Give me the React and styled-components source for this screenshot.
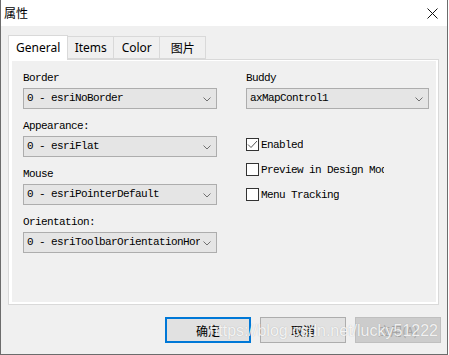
import React from "react";
import styled, { createGlobalStyle } from "styled-components";

const GlobalStyle = createGlobalStyle`
  html, body {
    margin: 0;
    padding: 0;
    background: #fff;
  }
  * {
    box-sizing: border-box;
  }
`;

const leftFields = [
  { label: "Border", value: "0 - esriNoBorder" },
  { label: "Appearance:", value: "0 - esriFlat" },
  { label: "Mouse", value: "0 - esriPointerDefault" },
  { label: "Orientation:", value: "0 - esriToolbarOrientationHorizontal" },
];

const checks = [
  { label: "Enabled", checked: true },
  { label: "Preview in Design Mode", checked: false },
  { label: "Menu Tracking", checked: false },
];

const tabs = ["General", "Items", "Color", "图片"];

function Chevron() {
  return (
    <svg width="8" height="5" viewBox="0 0 8 5">
      <polyline points="0.5,0.5 4,4 7.5,0.5" fill="none" stroke="#707070" strokeWidth="1" />
    </svg>
  );
}

function Combo({ value, width }) {
  return (
    <ComboBox $width={width}>
      <ComboText>{value}</ComboText>
      <ComboArrow>
        <Chevron />
      </ComboArrow>
    </ComboBox>
  );
}

export default function App() {
  return (
    <>
      <GlobalStyle />
      <Window>
        <TitleBar>
          <Title>属性</Title>
          <CloseButton>
            <svg width="11" height="11" viewBox="0 0 11 11">
              <line x1="0.5" y1="0.5" x2="10.5" y2="10.5" stroke="#111" strokeWidth="1" />
              <line x1="10.5" y1="0.5" x2="0.5" y2="10.5" stroke="#111" strokeWidth="1" />
            </svg>
          </CloseButton>
        </TitleBar>
        <Body>
          <TabRow>
            {tabs.map((t, i) => (
              <Tab key={t} $active={i === 0} $first={i === 0}>
                {t}
              </Tab>
            ))}
          </TabRow>
          <Panel>
            <Page>
              <Column>
                {leftFields.map((f) => (
                  <Field key={f.label}>
                    <Label>{f.label}</Label>
                    <Combo value={f.value} width={194} />
                  </Field>
                ))}
              </Column>
              <Column>
                <Field>
                  <Label>Buddy</Label>
                  <Combo value="axMapControl1" width={183} />
                </Field>
                <CheckList>
                  {checks.map((c) => (
                    <CheckRow key={c.label}>
                      <CheckBox>
                        {c.checked && (
                          <svg width="11" height="11" viewBox="0 0 11 11">
                            <polyline
                              points="1,5.5 4,8.5 10,2"
                              fill="none"
                              stroke="#555"
                              strokeWidth="1"
                            />
                          </svg>
                        )}
                      </CheckBox>
                      <CheckLabel>{c.label}</CheckLabel>
                    </CheckRow>
                  ))}
                </CheckList>
              </Column>
            </Page>
          </Panel>
          <ButtonRow>
            <Button $variant="default">确定</Button>
            <Button>取消</Button>
            <Button $variant="disabled">应用(A)</Button>
            <Watermark>https://blog.csdn.net/lucky51222</Watermark>
          </ButtonRow>
        </Body>
      </Window>
    </>
  );
}

const Window = styled.div`
  width: 448px;
  height: 355px;
  display: flex;
  flex-direction: column;
  border-left: 1px solid #6c6c6c;
  border-right: 1px solid #6c6c6c;
  border-bottom: 1px solid #6c6c6c;
  background: #f0f0f0;
  overflow: hidden;
`;

const TitleBar = styled.div`
  height: 26px;
  flex: none;
  display: flex;
  align-items: center;
  justify-content: space-between;
  background: #fff;
  padding: 0 9px 0 3px;
`;

const Title = styled.span`
  font-family: "Noto Sans CJK SC", sans-serif;
  font-size: 12px;
  color: #000;
  line-height: 1;
`;

const CloseButton = styled.div`
  display: flex;
  align-items: center;
`;

const Body = styled.div`
  flex: 1;
  display: flex;
  flex-direction: column;
  padding: 9px 7px 0 7px;
`;

const TabRow = styled.div`
  display: flex;
  align-items: flex-end;
  height: 24px;
  position: relative;
  z-index: 1;
`;

const Tab = styled.div`
  height: ${({ $active }) => ($active ? "25px" : "23px")};
  margin-bottom: ${({ $active }) => ($active ? "-1px" : "0")};
  margin-left: ${({ $first }) => ($first ? "0" : "-1px")};
  padding: ${({ $active }) => ($active ? "0 7px 2px" : "0 5px")};
  min-width: 47px;
  display: flex;
  align-items: center;
  justify-content: center;
  border: 1px solid #d9d9d9;
  border-bottom: ${({ $active }) => ($active ? "none" : "1px solid #d9d9d9")};
  background: ${({ $active }) => ($active ? "#fff" : "#f0f0f0")};
  font-family: "Noto Sans", "Noto Sans CJK SC", sans-serif;
  font-size: 12px;
  color: #000;
  position: relative;
  z-index: ${({ $active }) => ($active ? 2 : 1)};
`;

const Panel = styled.div`
  width: 431px;
  height: 246px;
  border: 1px solid #d9d9d9;
  background: #fff;
  padding: 1px 2px 2px 3px;
`;

const Page = styled.div`
  height: 100%;
  background: #f0f0f0;
  padding: 10px 0 0 11px;
  display: grid;
  grid-template-columns: 194px 183px;
  column-gap: 29px;
  align-content: start;
`;

const Column = styled.div`
  display: flex;
  flex-direction: column;
  gap: 10px;
`;

const Field = styled.div`
  display: flex;
  flex-direction: column;
`;

const monoText = `
  font-family: "Liberation Mono", monospace;
  font-size: 11px;
  letter-spacing: -0.6px;
  color: #000;
`;

const Label = styled.div`
  ${monoText};
  line-height: 14px;
  height: 14px;
  margin-bottom: 3px;
  white-space: nowrap;
`;

const ComboBox = styled.div`
  width: ${({ $width }) => $width}px;
  height: 21px;
  border: 1px solid #adadad;
  background: #e5e5e5;
  display: flex;
  align-items: center;
  padding: 0 16px 0 3px;
  position: relative;
`;

const ComboText = styled.span`
  ${monoText};
  white-space: nowrap;
  overflow: hidden;
  flex: 1;
  line-height: 19px;
`;

const ComboArrow = styled.span`
  position: absolute;
  right: 5px;
  top: 8px;
  display: flex;
`;

const CheckList = styled.div`
  display: flex;
  flex-direction: column;
  gap: 12px;
  margin-top: 19px;
`;

const CheckRow = styled.div`
  display: flex;
  align-items: center;
  height: 13px;
`;

const CheckBox = styled.span`
  width: 13px;
  height: 13px;
  flex: none;
  border: 1px solid #333;
  background: #fff;
  display: flex;
  align-items: center;
  justify-content: center;
  margin-right: 2px;
`;

const CheckLabel = styled.span`
  ${monoText};
  white-space: nowrap;
  overflow: hidden;
  max-width: 123px;
  line-height: 14px;
`;

const ButtonRow = styled.div`
  display: flex;
  justify-content: flex-end;
  gap: 9px;
  margin-top: 12px;
  margin-right: -1px;
  position: relative;
`;

const Button = styled.div`
  width: 86px;
  height: 26px;
  display: flex;
  align-items: center;
  justify-content: center;
  font-family: "Noto Sans CJK SC", sans-serif;
  font-size: 12px;
  background: ${({ $variant }) => ($variant === "disabled" ? "#cccccc" : "#e1e1e1")};
  color: ${({ $variant }) => ($variant === "disabled" ? "#a3a3a3" : "#000")};
  border: ${({ $variant }) =>
    $variant === "default"
      ? "2px solid #0078d7"
      : $variant === "disabled"
      ? "1px solid #bfbfbf"
      : "1px solid #adadad"};
`;

const Watermark = styled.span`
  position: absolute;
  right: 3px;
  top: 5px;
  font-family: "Liberation Sans", Arial, sans-serif;
  font-size: 16px;
  color: rgba(255, 255, 255, 0.85);
  text-shadow: 0 0 1px rgba(110, 110, 110, 0.45);
  pointer-events: none;
  white-space: nowrap;
`;
